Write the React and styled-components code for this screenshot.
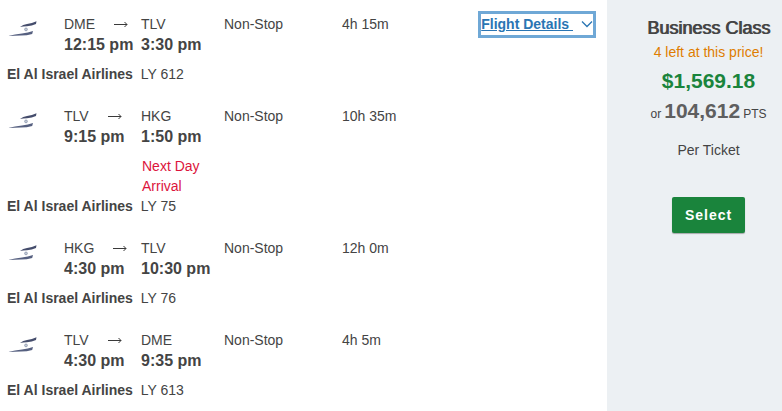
import React from 'react';
import styled, { createGlobalStyle } from 'styled-components';

const GlobalStyle = createGlobalStyle`
  * {
    box-sizing: border-box;
  }
  body {
    margin: 0;
    background: #ffffff;
    color: #444444;
    font-family: 'Liberation Sans', Arial, sans-serif;
    font-size: 14px;
    line-height: 20px;
  }
`;

const FareWrapper = styled.div`
  display: flex;
  align-items: stretch;
  min-height: 100vh;
`;
const Segments = styled.main`
  flex: 1;
  display: flex;
  flex-direction: column;
  gap: 22px;
  padding: 14px 11px 12px 7px;
`;
const SegmentRow = styled.div`
  display: grid;
  grid-template-columns: 57px 77px 83px 118px 1fr auto;
  align-items: start;
  margin-bottom: 8px;
`;
const Logo = styled.svg`
  width: 30px;
  height: 30px;
`;
const Airport = styled.div`
  display: flex;
  align-items: center;
  gap: 19px;
`;
const Arrow = styled.svg`
  width: 14px;
  height: 7px;
`;
const Time = styled.div`
  font-weight: 700;
  font-size: 16px;
  line-height: 22px;
  white-space: nowrap;
`;
const NextDay = styled.div`
  width: 64px;
  margin-top: 8px;
  margin-bottom: -8px;
  padding-left: 1px;
  color: #dc143c;
`;
const Carrier = styled.div`
  display: flex;
  gap: 8px;
`;
const DetailsLink = styled.a`
  display: flex;
  align-items: center;
  gap: 8px;
  margin-top: -3px;
  padding-bottom: 1px;
  border: 3px solid #6fa8d6;
  color: #2a75b3;
  font-weight: 700;
  text-decoration: none;
`;
const DetailsText = styled.span`
  text-decoration: underline;
  white-space: pre;
`;
const Fare = styled.aside`
  width: 175px;
  display: flex;
  flex-direction: column;
  align-items: center;
  padding: 16px 0 16px 28px;
  background: #ecf0f3;
`;
const FareName = styled.h2`
  margin: 0;
  font-weight: 400;
  font-size: 18px;
  line-height: 24px;
  text-shadow: 1px 0 0 #444444;
`;
const SeatsLeft = styled.div`
  margin-top: 2px;
  color: #df7d00;
`;
const Price = styled.div`
  margin-top: 4px;
  color: #1a843c;
  font-weight: 700;
  font-size: 21px;
  line-height: 30px;
`;
const Points = styled.div`
  display: flex;
  align-items: baseline;
  gap: 3px;
  font-size: 12px;
  line-height: 30px;
`;
const PointsAmount = styled.strong`
  color: #5f5f5f;
  font-size: 21px;
`;
const PerTicket = styled.div`
  margin-top: 11px;
`;
const SelectButton = styled.button`
  margin-top: 37px;
  padding: 8px 13px;
  border: 0;
  border-radius: 2px;
  background: #1a843c;
  box-shadow: 0 1px 1px rgba(0, 0, 0, 0.3);
  color: #ffffff;
  font: inherit;
  font-weight: 700;
  letter-spacing: 1px;
`;

const segments = [
  { from: 'DME', to: 'TLV', departs: '12:15 pm', arrives: '3:30 pm', duration: '4h 15m', flight: 'LY 612' },
  { from: 'TLV', to: 'HKG', departs: '9:15 pm', arrives: '1:50 pm', duration: '10h 35m', flight: 'LY 75', nextDay: true },
  { from: 'HKG', to: 'TLV', departs: '4:30 pm', arrives: '10:30 pm', duration: '12h 0m', flight: 'LY 76' },
  { from: 'TLV', to: 'DME', departs: '4:30 pm', arrives: '9:35 pm', duration: '4h 5m', flight: 'LY 613' },
];

function AirlineLogo() {
  return (
    <Logo viewBox="0 0 30 30" aria-hidden="true">
      <path d="M13 13 Q16 10.6 20 10 Q25 9.2 29.5 7.2 L29 10 Q25 11.8 20 12.2 Q16 12.4 13 13Z" fill="#454d6c" />
      <path d="M1 22 Q8 20.2 15 19.6 Q21 18.8 26 17 L25.2 20 Q20 21.6 14 21.6 Q7 21.6 1 22Z" fill="#566080" />
      <circle cx="19" cy="15.4" r="1.4" fill="#c5ccd8" stroke="#8f9bb0" strokeWidth="0.8" />
    </Logo>
  );
}

function FlightSegment({ segment, children }) {
  const { from, to, departs, arrives, duration, flight, nextDay } = segment;

  return (
    <section>
      <SegmentRow>
        <AirlineLogo />
        <div>
          <Airport>
            <span>{from}</span>
            <Arrow viewBox="0 0 14 7" role="img" aria-label="to">
              <path d="M0 3.5 H13 M10.5 1 L13 3.5 L10.5 6" fill="none" stroke="#3a3a3a" />
            </Arrow>
          </Airport>
          <Time>{departs}</Time>
        </div>
        <div>
          <Airport>{to}</Airport>
          <Time>{arrives}</Time>
          {nextDay && <NextDay>Next Day Arrival</NextDay>}
        </div>
        <div>Non-Stop</div>
        <div>{duration}</div>
        {children}
      </SegmentRow>
      <Carrier>
        <strong>El Al Israel Airlines</strong>
        <span>{flight}</span>
      </Carrier>
    </section>
  );
}

function App() {
  return (
    <FareWrapper>
      <GlobalStyle />
      <Segments>
        {segments.map((segment, index) => (
          <FlightSegment key={segment.flight} segment={segment}>
            {index === 0 && (
              <DetailsLink href="#details">
                <DetailsText>{'Flight Details '}</DetailsText>
                <svg width="12" height="8" viewBox="0 0 12 8" fill="none" aria-hidden="true">
                  <path d="M1 1.5 L6 6.5 L11 1.5" stroke="#2a75b3" strokeWidth="1.3" />
                </svg>
              </DetailsLink>
            )}
          </FlightSegment>
        ))}
      </Segments>
      <Fare>
        <FareName>Business Class</FareName>
        <SeatsLeft>4 left at this price!</SeatsLeft>
        <Price>$1,569.18</Price>
        <Points>
          <span>or</span>
          <PointsAmount>104,612</PointsAmount>
          <span>PTS</span>
        </Points>
        <PerTicket>Per Ticket</PerTicket>
        <SelectButton type="button">Select</SelectButton>
      </Fare>
    </FareWrapper>
  );
}

export default App;
